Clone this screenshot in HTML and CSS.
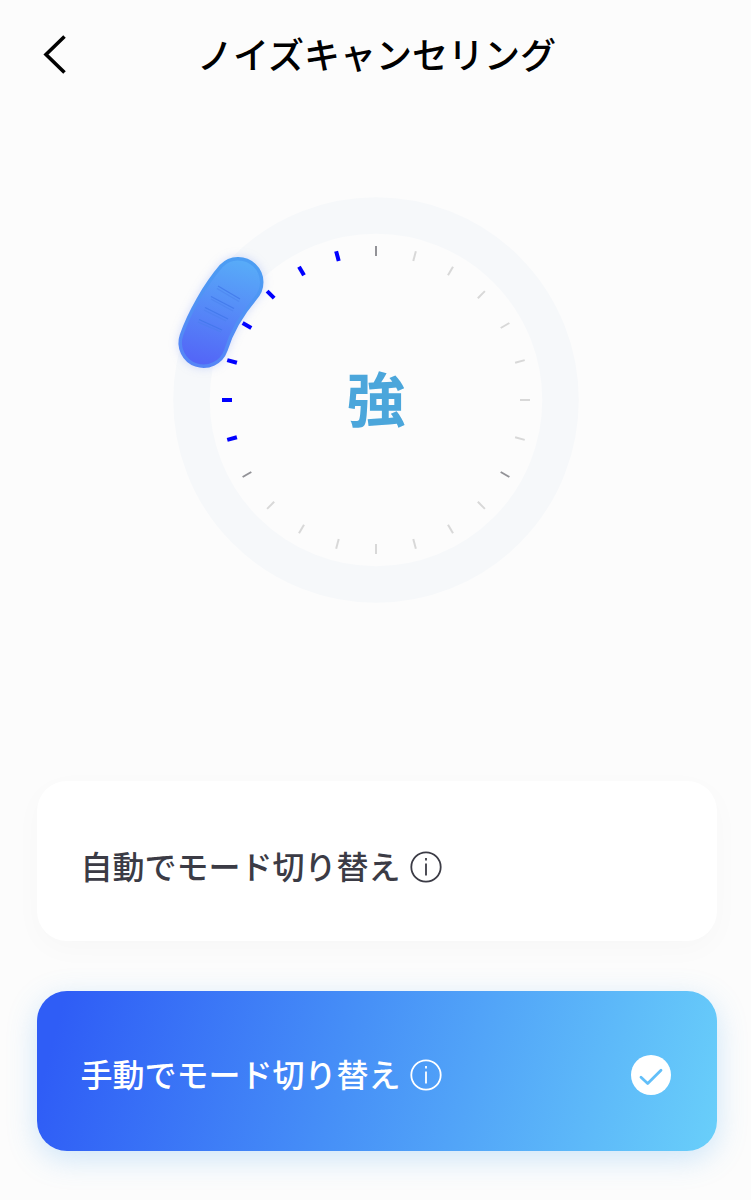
FILE: index.html
```html
<!DOCTYPE html>
<html lang="ja">
<head>
    <meta charset="UTF-8">
    <meta name="viewport" content="width=device-width, initial-scale=1.0">
    <title>ノイズキャンセリング</title>
    <link rel="stylesheet" href="styles.css">
</head>
<body>
    <header class="header">
        <svg class="back" viewBox="0 0 26 40" width="26" height="40">
            <path d="M22.500 2.500L4 20.500L22.500 38.500"/>
        </svg>
        <h1>ノイズキャンセリング</h1>
    </header>

    <main>
        <div class="dial">
            <svg class="dial-ring" viewBox="0 0 420 420" width="420" height="420">
                <defs>
                    <linearGradient id="thumbFill" x1="0.6" y1="0" x2="0.4" y2="1">
                        <stop offset="0" stop-color="#58abf8"/>
                        <stop offset="1" stop-color="#5366f7"/>
                    </linearGradient>
                    <linearGradient id="thumbEdge" x1="0.6" y1="0" x2="0.4" y2="1">
                        <stop offset="0" stop-color="#4c9df3"/>
                        <stop offset="1" stop-color="#5585f6"/>
                    </linearGradient>
                </defs>
                <circle class="track" cx="210" cy="210" r="184.5"/>

                <!-- 目盛り (15度ごと) -->
                <g class="ticks">
                    <path class="major" d="M210 56v10"/>
                    <path d="M210 56v10" transform="rotate(15 210 210)"/>
                    <path d="M210 56v10" transform="rotate(30 210 210)"/>
                    <path d="M210 56v10" transform="rotate(45 210 210)"/>
                    <path d="M210 56v10" transform="rotate(60 210 210)"/>
                    <path d="M210 56v10" transform="rotate(75 210 210)"/>
                    <path d="M210 56v10" transform="rotate(90 210 210)"/>
                    <path d="M210 56v10" transform="rotate(105 210 210)"/>
                    <path class="major" d="M210 56v10" transform="rotate(120 210 210)"/>
                    <path d="M210 56v10" transform="rotate(135 210 210)"/>
                    <path d="M210 56v10" transform="rotate(150 210 210)"/>
                    <path d="M210 56v10" transform="rotate(165 210 210)"/>
                    <path d="M210 56v10" transform="rotate(180 210 210)"/>
                    <path d="M210 56v10" transform="rotate(195 210 210)"/>
                    <path d="M210 56v10" transform="rotate(210 210 210)"/>
                    <path d="M210 56v10" transform="rotate(225 210 210)"/>
                    <path class="major" d="M210 56v10" transform="rotate(240 210 210)"/>
                    <path class="active" d="M210 56v10" transform="rotate(255 210 210)"/>
                    <path class="active" d="M210 56v10" transform="rotate(270 210 210)"/>
                    <path class="active" d="M210 56v10" transform="rotate(285 210 210)"/>
                    <path class="active" d="M210 56v10" transform="rotate(300 210 210)"/>
                    <path class="active" d="M210 56v10" transform="rotate(315 210 210)"/>
                    <path class="active" d="M210 56v10" transform="rotate(330 210 210)"/>
                    <path class="active" d="M210 56v10" transform="rotate(345 210 210)"/>
                </g>

                <!-- つまみ -->
                <g class="thumb">
                    <path fill="url(#thumbFill)" stroke="url(#thumbEdge)" stroke-width="3.5" d="M55.2 76 C39 95 23.500 122 15.500 145 A23.300 23.300 0 0 0 59.800 160.500 C65 143 77 123 89.200 108.500 A23.300 23.300 0 0 0 55.2 76Z"/>
                    <path class="grip" d="M52 96l22 13M45 106.500l23 12M39 117.500l23 11.500M33 129.500l23 10.500"/>
                    <path class="grip-light" d="M51 98.500l22 13M45 109l22 12M38 120l22 11M32 132l23 10"/>
                </g>
            </svg>
            <span class="level">強</span>
        </div>

        <div class="modes">
            <div class="mode">
                <span class="mode-name">自動でモード切り替え</span>
                <svg class="info" viewBox="0 0 32 32" width="32" height="32">
                    <circle cx="16" cy="16" r="14.7"/>
                    <path d="M16 12.500v12M16 7v2.500"/>
                </svg>
            </div>

            <div class="mode selected">
                <span class="mode-name">手動でモード切り替え</span>
                <svg class="info" viewBox="0 0 32 32" width="32" height="32">
                    <circle cx="16" cy="16" r="14.7"/>
                    <path d="M16 12.500v12M16 7v2.500"/>
                </svg>
                <svg class="check" viewBox="0 0 40 40" width="40" height="40">
                    <circle cx="20" cy="20" r="20"/>
                    <path d="M10 22.300L16.700 28.500L30 15.300"/>
                </svg>
            </div>
        </div>
    </main>
</body>
</html>
```
FILE: styles.css
```css
* {
    margin: 0;
    padding: 0;
    box-sizing: border-box;
}

body {
    font-family: 'Noto Sans CJK JP', sans-serif;
    background: #fcfcfc;
    min-height: 1200px;
    color: #000;
}

.header {
    display: grid;
    grid-template-columns: 26px 1fr 26px;
    align-items: center;
    height: 108px;
    padding: 0 40px 0 42px;
}

.header h1 {
    padding-bottom: 3px;
    font-size: 36px;
    font-weight: 500;
    line-height: 54px;
    text-align: center;
    white-space: nowrap;
}

.back {
    fill: none;
    stroke: #000;
    stroke-width: 3.6;
}

.dial {
    display: grid;
    place-items: center;
    width: 420px;
    height: 420px;
    margin: 82px auto 0 166px;
}

.dial-ring,
.level {
    grid-area: 1 / 1;
}

.track {
    fill: none;
    stroke: #f6f8fa;
    stroke-width: 36.5;
}

.ticks path {
    stroke: #d8d8d8;
    stroke-width: 2;
}

.ticks .major {
    stroke: #929297;
}

.ticks .active {
    stroke: #0000ff;
    stroke-width: 4;
}

.thumb {
    filter: drop-shadow(0 0 5px rgba(83, 120, 247, 0.25));
}

.grip,
.grip-light {
    fill: none;
    stroke: #3f76e8;
    stroke-width: 1.2;
    opacity: 0.75;
}

.grip-light {
    stroke: #4980ee;
    opacity: 0.5;
}

.level {
    padding-bottom: 6px;
    color: #4ba6db;
    font-size: 59px;
    font-weight: 700;
    line-height: 88px;
}

.modes {
    display: flex;
    flex-direction: column;
    gap: 50px;
    margin-top: 171px;
    padding: 0 34.5px 0 36.5px;
}

.mode {
    display: flex;
    align-items: center;
    height: 160px;
    padding: 11px 45.5px 0 44px;
    border-radius: 30px;
    background: #fff;
    color: #3b3b45;
    box-shadow: 0 8px 30px rgba(0, 0, 0, 0.025);
}

.mode-name {
    padding-bottom: 4px;
    font-size: 32px;
    font-weight: 500;
    line-height: 48px;
    white-space: nowrap;
}

.info {
    margin-left: 9.5px;
    fill: none;
    stroke: currentColor;
    stroke-width: 1.8;
}

.selected {
    padding-top: 8px;
    background: linear-gradient(105deg, #2f5df6 4%, #468ff7 45%, #69cffa 100%);
    color: #fff;
    box-shadow: 0 8px 30px rgba(75, 166, 240, 0.26);
}

.check {
    margin-left: auto;
    fill: #fff;
}

.check path {
    fill: none;
    stroke: #62bff9;
    stroke-width: 2.8;
    stroke-linecap: round;
    stroke-linejoin: round;
}
```
